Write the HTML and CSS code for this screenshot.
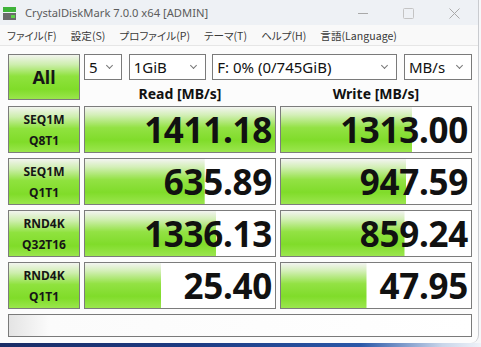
FILE: index.html
```html
<!DOCTYPE html>
<html lang="ja">
<head>
    <meta charset="UTF-8">
    <title>CrystalDiskMark 7.0.0 x64 [ADMIN]</title>
    <link rel="stylesheet" href="styles.css">
</head>
<body>
    <div class="window">
        <div class="titlebar">
            <svg class="app-icon" width="14" height="16" viewBox="0 0 14 16">
                <rect x="0" y="1" width="13" height="5" fill="#3fb33a"/>
                <rect x="0" y="7" width="13" height="7" fill="#6b6b6b"/>
                <rect x="8" y="9" width="4" height="3" fill="#5fd14a"/>
            </svg>
            <span class="title">CrystalDiskMark 7.0.0 x64 [ADMIN]</span>
            <div class="caption-buttons">
                <svg width="46" height="25" viewBox="0 0 46 25"><line x1="18" y1="13.5" x2="28" y2="13.5" stroke="#a9a9a9" stroke-width="1"/></svg>
                <svg width="46" height="25" viewBox="0 0 46 25"><rect x="17.5" y="8.5" width="10" height="10" rx="1" fill="none" stroke="#c4c4c4" stroke-width="1"/></svg>
                <svg width="46" height="25" viewBox="0 0 46 25"><path d="M17.5 8.5 L27.5 18.5 M27.5 8.5 L17.5 18.5" stroke="#a9a9a9" stroke-width="1"/></svg>
            </div>
        </div>

        <div class="menubar">
            <span>ファイル(F)</span>
            <span>設定(S)</span>
            <span>プロファイル(P)</span>
            <span>テーマ(T)</span>
            <span>ヘルプ(H)</span>
            <span>言語(Language)</span>
        </div>

        <div class="client">
            <button class="all-btn">All</button>

            <div class="top-right">
                <div class="combos">
                    <div class="combo combo-count">5<span class="chev"></span></div>
                    <div class="combo combo-size">1GiB<span class="chev"></span></div>
                    <div class="combo combo-drive">F: 0% (0/745GiB)<span class="chev"></span></div>
                    <div class="combo combo-unit">MB/s<span class="chev"></span></div>
                </div>
                <div class="head">Read [MB/s]</div>
                <div class="head">Write [MB/s]</div>
            </div>

            <button class="test-btn">SEQ1M<br>Q8T1</button>
            <div class="result" style="--fill: 100%">1411.18</div>
            <div class="result" style="--fill: 69%">1313.00</div>

            <button class="test-btn">SEQ1M<br>Q1T1</button>
            <div class="result" style="--fill: 63%">635.89</div>
            <div class="result" style="--fill: 66%">947.59</div>

            <button class="test-btn">RND4K<br>Q32T16</button>
            <div class="result" style="--fill: 69%">1336.13</div>
            <div class="result" style="--fill: 65%">859.24</div>

            <button class="test-btn">RND4K<br>Q1T1</button>
            <div class="result" style="--fill: 40%">25.40</div>
            <div class="result" style="--fill: 45%">47.95</div>

            <div class="comment"></div>
        </div>
    </div>
    <div class="desktop"></div>
</body>
</html>
```

FILE: styles.css
```css
body {
    margin: 0;
    width: 481px;
    height: 347px;
    overflow: hidden;
    background-color: #f6f7f9;
    font-family: 'Noto Sans', 'Noto Sans CJK JP', sans-serif;
    color: #111;
}

.window {
    width: 478px;
    height: 343px;
    border-right: 1px solid #c9cbcf;
    border-bottom-right-radius: 8px;
    background-color: #fcfcfc;
    overflow: hidden;
    display: flex;
    flex-direction: column;
}

.titlebar {
    height: 25px;
    display: flex;
    align-items: center;
    background-color: #eef1f5;
}

.app-icon {
    margin-left: 3px;
    margin-top: 3px;
}

.title {
    margin-left: 8px;
    font-size: 11.2px;
    color: #5c5c5c;
}

.caption-buttons {
    margin-left: auto;
    display: flex;
}

.menubar {
    height: 20px;
    display: flex;
    align-items: center;
    gap: 14px;
    padding-left: 7px;
    background-color: #f9f9f9;
    border-bottom: 1px solid #e6e6e6;
    font-family: 'Noto Sans CJK JP', sans-serif;
    font-feature-settings: "palt";
    font-size: 10.6px;
    color: #3a3a3a;
}

.client {
    flex: 1;
    display: grid;
    grid-template-columns: 72px 192px 192px;
    grid-template-rows: 47px repeat(4, 47px) 23px;
    column-gap: 4px;
    row-gap: 5px;
    padding: 8px 0 0 8px;
}

.client .comment {
    grid-column: 1 / 4;
}

button {
    font-family: inherit;
    padding: 0;
    cursor: pointer;
}

.all-btn,
.test-btn,
.result {
    border: 1px solid #7c7c7c;
}

.all-btn,
.test-btn {
    background: linear-gradient(to bottom, #f2f4ee 0%, #cdeead 22%, #8fe23e 48%, #80dc29 78%, #9ae64c 100%);
    color: #161616;
    font-weight: bold;
}

.all-btn {
    height: 46px;
    font-size: 18px;
}

.test-btn {
    font-size: 12px;
    line-height: 21px;
}

.top-right {
    grid-column: 2 / 4;
    display: grid;
    grid-template-columns: 192px 192px;
    grid-template-rows: 26px 21px;
    column-gap: 4px;
}

.combos {
    grid-column: 1 / 3;
    display: flex;
    justify-content: space-between;
}

.combo {
    position: relative;
    box-sizing: border-box;
    height: 26px;
    border: 1px solid #7a7a7a;
    background-color: #fff;
    font-size: 15px;
    line-height: 24px;
    padding-left: 4px;
    color: #111;
}

.combo-count { width: 38px; }
.combo-size { width: 77px; }
.combo-drive { width: 185px; }
.combo-unit { width: 68px; }

.chev {
    position: absolute;
    right: 9px;
    top: 8px;
    width: 4px;
    height: 4px;
    border-right: 1px solid #777;
    border-bottom: 1px solid #777;
    transform: rotate(45deg);
}

.head {
    font-size: 14px;
    font-weight: bold;
    text-align: center;
    line-height: 21px;
    padding-top: 3px;
}

.result {
    --bar: linear-gradient(to bottom, #f3f4f1 0%, #d3efb7 18%, #93e244 46%, #80dc2a 74%, #9be64e 100%);
    background: var(--bar) 0 0 / var(--fill) 100% no-repeat, #fff;
    text-align: right;
    font-size: 35px;
    font-weight: bold;
    line-height: 45px;
    padding-right: 3px;
    letter-spacing: -0.3px;
}

.comment {
    box-sizing: border-box;
    width: 464px;
    height: 23px;
    border: 1px solid #7a7a7a;
    background: linear-gradient(to right, #e4e4e4, #fbfbfb 40px, #fff);
}

.desktop {
    height: 4px;
    background: linear-gradient(to right, #1a2c66 0%, #1d3b83 40%, #2b58a8 75%, #c9d6ea 92%, #eef2f8 100%);
}
```
